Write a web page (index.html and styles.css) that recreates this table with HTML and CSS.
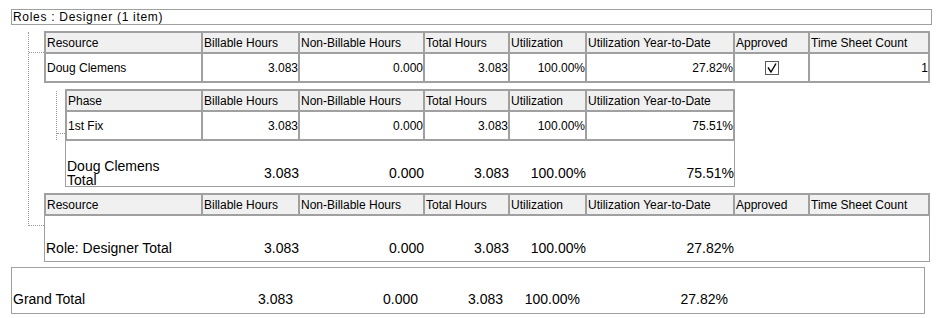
FILE: index.html
```html
<!DOCTYPE html>
<html>
<head>
<meta charset="utf-8">
<link rel="stylesheet" href="styles.css">
</head>
<body>
<div class="report">
  <div class="roles">Roles : Designer (1 item)</div>
  <div class="tree tree-role">
    <div class="grid grid-res branch branch-res">
      <div class="th">Resource</div>
      <div class="th">Billable Hours</div>
      <div class="th">Non-Billable Hours</div>
      <div class="th">Total Hours</div>
      <div class="th">Utilization</div>
      <div class="th">Utilization Year-to-Date</div>
      <div class="th">Approved</div>
      <div class="th">Time Sheet Count</div>

      <div class="td">Doug Clemens</div>
      <div class="td num">3.083</div>
      <div class="td num">0.000</div>
      <div class="td num">3.083</div>
      <div class="td num">100.00%</div>
      <div class="td num">27.82%</div>
      <div class="td center">
        <svg class="check" width="14" height="14" viewBox="0 0 14 14"><rect x="0.5" y="0.5" width="13" height="13" fill="#fff" stroke="#5a5a5a"/><path d="M3 6.5 L6 11 L11 2.5" fill="none" stroke="#000" stroke-width="1.4"/></svg>
      </div>
      <div class="td num">1</div>
    </div>

    <div class="tree tree-phase">
      <div class="grid grid-phase branch branch-phase">
        <div class="th">Phase</div>
        <div class="th">Billable Hours</div>
        <div class="th">Non-Billable Hours</div>
        <div class="th">Total Hours</div>
        <div class="th">Utilization</div>
        <div class="th">Utilization Year-to-Date</div>

        <div class="td">1st Fix</div>
        <div class="td num">3.083</div>
        <div class="td num">0.000</div>
        <div class="td num">3.083</div>
        <div class="td num">100.00%</div>
        <div class="td num">75.51%</div>

        <div class="tot tot-label"><span class="wrap-label">Doug Clemens Total</span></div>
        <div class="tot num">3.083</div>
        <div class="tot num">0.000</div>
        <div class="tot num">3.083</div>
        <div class="tot num">100.00%</div>
        <div class="tot num">75.51%</div>
      </div>
    </div>

    <div class="grid grid-res branch branch-total">
      <div class="th">Resource</div>
      <div class="th">Billable Hours</div>
      <div class="th">Non-Billable Hours</div>
      <div class="th">Total Hours</div>
      <div class="th">Utilization</div>
      <div class="th">Utilization Year-to-Date</div>
      <div class="th">Approved</div>
      <div class="th">Time Sheet Count</div>

      <div class="tot tot-label">Role: Designer Total</div>
      <div class="tot num">3.083</div>
      <div class="tot num">0.000</div>
      <div class="tot num">3.083</div>
      <div class="tot num">100.00%</div>
      <div class="tot num">27.82%</div>
      <div class="tot"></div>
      <div class="tot"></div>
    </div>
  </div>

  <div class="grand">
    <div class="g-cell g-label">Grand Total</div>
    <div class="g-cell num">3.083</div>
    <div class="g-cell num">0.000</div>
    <div class="g-cell num">3.083</div>
    <div class="g-cell num">100.00%</div>
    <div class="g-cell num">27.82%</div>
    <div class="g-cell"></div>
  </div>
</div>
</body>
</html>
```

FILE: styles.css
```css
body {
  margin: 0;
  background: #fff;
  color: #000;
  font-family: "Liberation Sans", Arial, sans-serif;
  font-size: 12px;
}

.report {
  padding: 9px 0 0 11px;
}

.roles {
  width: 918px;
  height: 14px;
  line-height: 14px;
  padding-left: 1px;
  border: 1px solid #a0a0a0;
  letter-spacing: 0.7px;
  white-space: nowrap;
}

.tree {
  position: relative;
}

.tree::before {
  content: "";
  position: absolute;
  left: 0;
  border-left: 1px dotted #999;
}

.tree-role {
  margin-left: 17px;
  padding-left: 16px;
}

.tree-role::before {
  top: 1px;
  bottom: 36px;
}

.tree-phase {
  margin-left: 12px;
  padding-left: 9px;
}

.tree-phase::before {
  top: 2px;
  height: 49px;
}

.branch {
  position: relative;
}

.branch::before {
  content: "";
  position: absolute;
  border-top: 1px dotted #999;
}

.branch-res::before {
  left: -16px;
  width: 15px;
  top: 20px;
}

.branch-total::before {
  left: -16px;
  width: 15px;
  top: 31px;
}

.branch-phase::before {
  left: -9px;
  width: 8px;
  top: 43px;
}

.grid {
  display: grid;
  border: 1px solid #a0a0a0;
  margin-top: 6px;
}

.grid-res {
  width: 884px;
  grid-template-columns: 157px 97px 125px 85px 77px 148px 75px 120px;
}

.grid-phase {
  width: 668px;
  grid-template-columns: 136px 97px 125px 85px 77px 148px;
}

.th,
.td {
  box-sizing: border-box;
  border: 1px solid #a0a0a0;
  display: flex;
  align-items: center;
  padding: 0 1px;
  white-space: nowrap;
  overflow: hidden;
}

.th {
  height: 21px;
  background: #f0f0f0;
}

.td {
  height: 29px;
}

.num {
  justify-content: flex-end;
  padding-right: 0;
}

.center {
  justify-content: center;
}

.check {
  display: block;
}

.tot {
  box-sizing: border-box;
  height: 46px;
  border-top: 1px solid #a0a0a0;
  padding: 18px 0 0 1px;
  display: flex;
  align-items: center;
  font-size: 14px;
  line-height: 14px;
  white-space: nowrap;
}

.tot.num {
  padding-left: 0;
}

.tot-label {
  white-space: normal;
}

.wrap-label {
  display: block;
  width: 110px;
}

.grand {
  display: grid;
  grid-template-columns: 184px 97px 125px 85px 77px 148px 1fr;
  width: 912px;
  height: 45px;
  margin-top: 5px;
  border: 1px solid #a0a0a0;
  font-size: 14px;
  line-height: 14px;
}

.g-cell {
  display: flex;
  align-items: center;
  padding-top: 16px;
  white-space: nowrap;
}

.g-label {
  padding-left: 1px;
}
```
